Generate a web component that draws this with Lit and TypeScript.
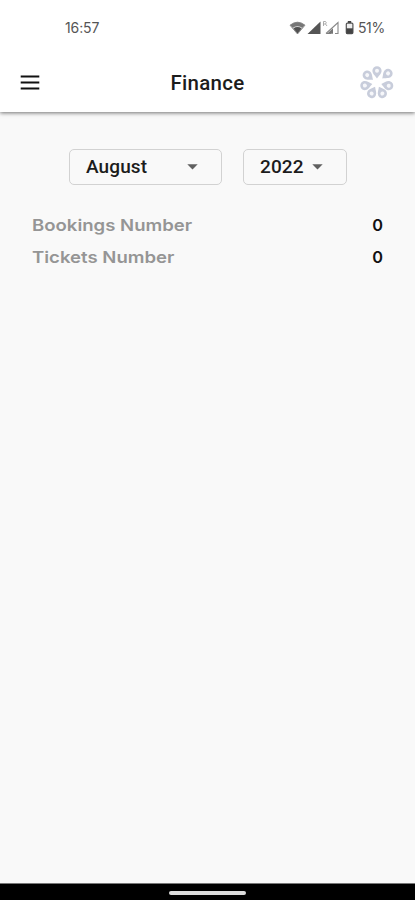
import { LitElement, html, css, svg } from "lit";
import { customElement } from "lit/decorators.js";

// Petal angle (degrees clockwise from the top) and distance of its head from the centre.
const petals = [[0, 12.2], [49, 14.6], [103, 12], [153, 11.8], [207, 11.8], [258, 12.4], [309, 12.6]];

@customElement("app-root")
export class AppRoot extends LitElement {
  static styles = css`
    :host { display: flex; flex-direction: column; height: 900px; width: 415px; background: #f9f9f9; font-family: Roboto, sans-serif; color: #1c1c1c; overflow: hidden; }
    * { box-sizing: border-box; }
    svg { display: block; flex: none; }
    .top { flex: none; background: #fff; box-shadow: 0 1px 4px rgba(0,0,0,.55); z-index: 1; }
    .status { height: 55px; display: flex; justify-content: space-between; align-items: center; padding: 0 30px 0 65px; font: 400 14px/20px Inter, sans-serif; color: #555; }
    .time { letter-spacing: -0.1px; }
    .right { display: flex; align-items: center; gap: 3px; }
    .pct { letter-spacing: -0.4px; width: 27px; white-space: nowrap; }
    .bar { height: 57px; display: grid; grid-template-columns: 40px 1fr 40px; align-items: center; padding: 0 18px 2px; }
    h1 { margin: 0; text-align: center; font-size: 20.5px; font-weight: 500; line-height: 28px; letter-spacing: 0.25px; }
    .filters { display: flex; gap: 21px; padding: 37px 0 0 69px; }
    .select { height: 36px; border: 1px solid #d2d2d2; border-radius: 5px; display: flex; align-items: center; justify-content: space-between; padding: 0 23px 1px 16px; font-size: 19px; font-weight: 500; letter-spacing: .1px; }
    .month { width: 153px; }
    .year { width: 104px; }
    .rows { padding: 25px 32px 0; flex: 1; font: 600 16.3px/31px Inter, sans-serif; }
    .row { display: flex; justify-content: space-between; height: 31.5px; }
    .label { color: #959595; transform: scaleX(1.14); transform-origin: left; }
    .value { color: #111; }
    .nav { height: 17px; flex: none; background: #000; border-top: 1px solid #777; display: flex; justify-content: center; padding-top: 7px; }
    .pill { width: 77px; height: 4px; border-radius: 2px; background: #ddd; }
  `;

  caret() {
    return html`<svg width="11" height="6" viewBox="0 0 11 6"><path d="M.3 .3h10.4L5.5 5.6Z" fill="#606060"/></svg>`;
  }

  render() {
    return html`
      <div class="top">
        <div class="status">
          <span class="time">16:57</span>
          <div class="right">
            <svg width="66" height="18" viewBox="0 0 66 18">
              <path d="M1 6.2Q8.5 .2 16 6.2L8.5 15Z" fill="#d0d0d0" stroke="#777" stroke-width=".8"/>
              <path d="M1.3 6Q8.5 .5 15.7 6L13.3 8.8Q8.5 5.2 3.7 8.8Z" fill="#777"/>
              <path d="M4.5 9.5Q8.5 6.6 12.5 9.5L8.5 14.5Z" fill="#505050"/>
              <path d="M18.5 15 31.5 2.5V15Z" fill="#555"/>
              <path d="M34.5 7V2.5H36.5Q38 3.8 36.5 5H34.5M36.5 5 38 7" fill="none" stroke="#999" stroke-width=".8"/>
              <path d="M37 14.5 49 3.5v11h-3M37 14.5h5" fill="none" stroke="#888" stroke-width="1.1"/>
              <path d="M38 14.8 44 9.3v5.5Z" fill="#777"/>
              <path d="M58.8 2h3.4v2h-3.4Z" fill="#444"/>
              <rect x="57.3" y="4.2" width="6.6" height="10.4" rx="1" fill="#eee" stroke="#555" stroke-width="1.2"/>
              <path d="M57.3 9.3h6.6v5.2h-6.6Z" fill="#444"/>
            </svg>
            <span class="pct">51%</span>
          </div>
        </div>
        <header class="bar">
          <svg width="24" height="24" viewBox="0 0 24 24"><path d="M2.7 5.5h18.6M2.7 11.5h18.6M2.7 17.5h18.6" stroke="#111" stroke-width="2"/></svg>
          <h1>Finance</h1>
          <svg width="40" height="40" viewBox="-20 -20 40 40">
            ${petals.map(([a, r]) => svg`<g transform="rotate(${a}) translate(0 ${-r})">
              <path d="M0 7.6C-1.8 4.8-4.6 3-4.6-.1A4.6 4.5 0 0 1 4.6-.1C4.6 3 1.8 4.8 0 7.6Z" fill="#c8cddb"/>
              <circle r="2" fill="#f6f7fa"/></g>`)}
          </svg>
        </header>
      </div>
      <div class="filters">
        <div class="select month"><span>August</span>${this.caret()}</div>
        <div class="select year"><span>2022</span>${this.caret()}</div>
      </div>
      <div class="rows">
        <div class="row"><span class="label">Bookings Number</span><span class="value">0</span></div>
        <div class="row"><span class="label">Tickets Number</span><span class="value">0</span></div>
      </div>
      <div class="nav"><div class="pill"></div></div>
    `;
  }
}
